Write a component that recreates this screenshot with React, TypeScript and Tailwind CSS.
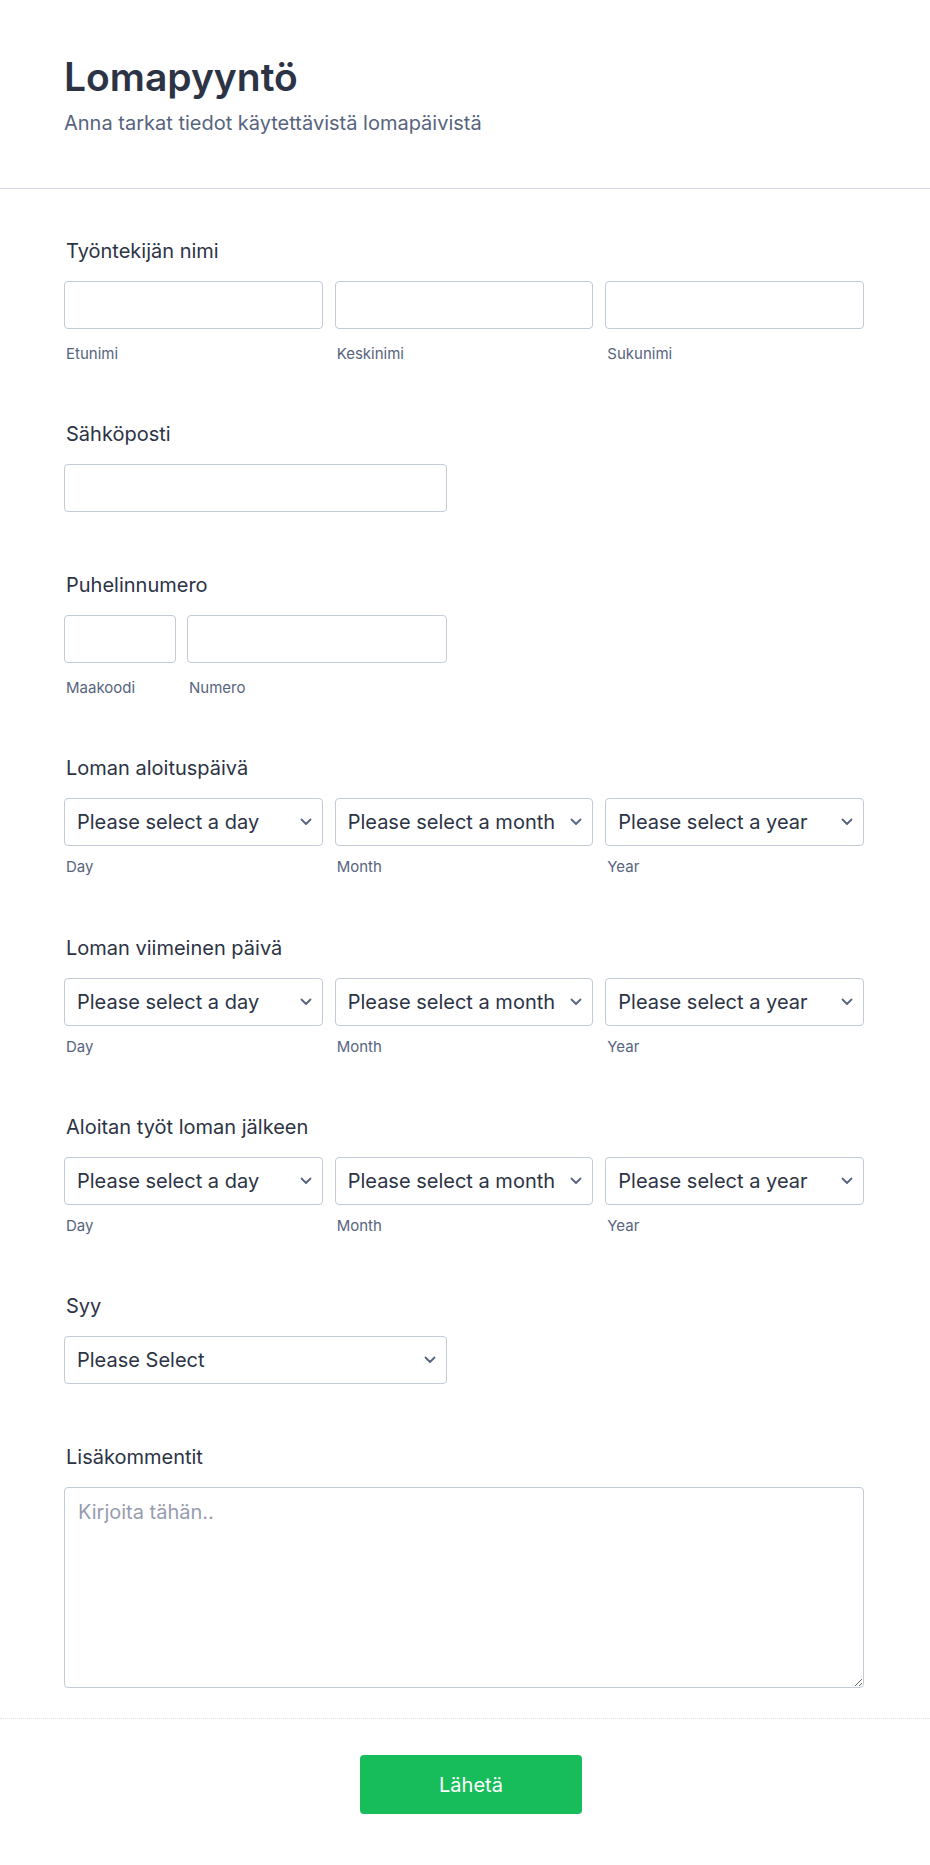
import React from "react";

const Chevron = () => (
  <svg width="12" height="8" viewBox="0 0 12 8" fill="none" className="shrink-0">
    <path d="M1.5 1.5L6 6l4.5-4.5" stroke="#57647e" strokeWidth="1.8" strokeLinecap="round" strokeLinejoin="round" />
  </svg>
);

const Label = ({ children }: { children: React.ReactNode }) => (
  <div className="mb-[16px] pl-[2px] text-[20px] leading-7 text-[#2c3345]">{children}</div>
);

const Sub = ({ children, className = "mt-[16px]" }: { children: React.ReactNode; className?: string }) => (
  <div className={`${className} pl-[2px] text-[15px] leading-[17px] text-[#57647e]`}>{children}</div>
);

const TextBox = ({ className = "" }: { className?: string }) => (
  <input type="text" className={`h-12 w-full rounded-[4px] border border-[#c3cad8] bg-white outline-none ${className}`} />
);

const Select = ({ text }: { text: string }) => (
  <div className="h-12 w-full rounded-[4px] border border-[#c3cad8] bg-white flex items-center justify-between pl-[12px] pr-[10px]">
    <span className="text-[20px] text-[#2c3345] whitespace-nowrap">{text}</span>
    <Chevron />
  </div>
);

function DateField({ label, className = "" }: { label: string; className?: string }) {
  const cols = [
    { text: "Please select a day", sub: "Day" },
    { text: "Please select a month", sub: "Month" },
    { text: "Please select a year", sub: "Year" },
  ];
  return (
    <div className={className}>
      <Label>{label}</Label>
      <div className="grid grid-cols-3 gap-3">
        {cols.map((c) => (
          <div key={c.sub}>
            <Select text={c.text} />
            <Sub className="mt-[12px]">{c.sub}</Sub>
          </div>
        ))}
      </div>
    </div>
  );
}

export default function App() {
  return (
    <div className="min-h-[1865px] bg-white font-['Inter','Liberation_Sans',sans-serif] text-[#2c3345]">
      {/* header */}
      <div className="border-b border-[#d6d9e2] pt-[57px] pb-[51px] pl-16 pr-[66px]">
        <h1 className="text-[39px] leading-10 font-semibold text-[#2c3345]">Lomapyyntö</h1>
        <p className="mt-3 text-[20px] leading-7 text-[#57647e]">Anna tarkat tiedot käytettävistä lomapäivistä</p>
      </div>

      {/* form */}
      <div className="pt-[48px] pb-[30px] pl-16 pr-[66px] flex flex-col">
        <div>
          <Label>Työntekijän nimi</Label>
          <div className="grid grid-cols-3 gap-3">
            {["Etunimi", "Keskinimi", "Sukunimi"].map((s) => (
              <div key={s}>
                <TextBox />
                <Sub>{s}</Sub>
              </div>
            ))}
          </div>
        </div>

        <div className="mt-[58px]">
          <Label>Sähköposti</Label>
          <TextBox className="!w-[383px]" />
        </div>

        <div className="mt-[59px]">
          <Label>Puhelinnumero</Label>
          <div className="flex gap-[11px] w-[383px]">
            <div className="w-[112px] shrink-0">
              <TextBox />
              <Sub>Maakoodi</Sub>
            </div>
            <div className="flex-1">
              <TextBox />
              <Sub>Numero</Sub>
            </div>
          </div>
        </div>

        <DateField className="mt-[58px]" label="Loman aloituspäivä" />
        <DateField className="mt-[59px]" label="Loman viimeinen päivä" />
        <DateField className="mt-[58px]" label="Aloitan työt loman jälkeen" />

        <div className="mt-[58px]">
          <Label>Syy</Label>
          <div className="w-[383px]">
            <Select text="Please Select" />
          </div>
        </div>

        <div className="mt-[59px]">
          <Label>Lisäkommentit</Label>
          <textarea
            placeholder="Kirjoita tähän.."
            className="block h-[201px] w-full rounded-[4px] border border-[#c3cad8] bg-white px-[13px] py-[10px] text-[20px] leading-7 outline-none placeholder:text-[#979cb0]"
          />
        </div>
      </div>

      {/* footer */}
      <div className="border-t border-dotted border-[#dfe1ea] pt-[36px] pb-[51px] flex justify-center pl-3">
        <button className="h-[59px] w-[222px] rounded-[4px] bg-[#18bd5b] text-white text-[20px]">
          Lähetä
        </button>
      </div>
    </div>
  );
}
